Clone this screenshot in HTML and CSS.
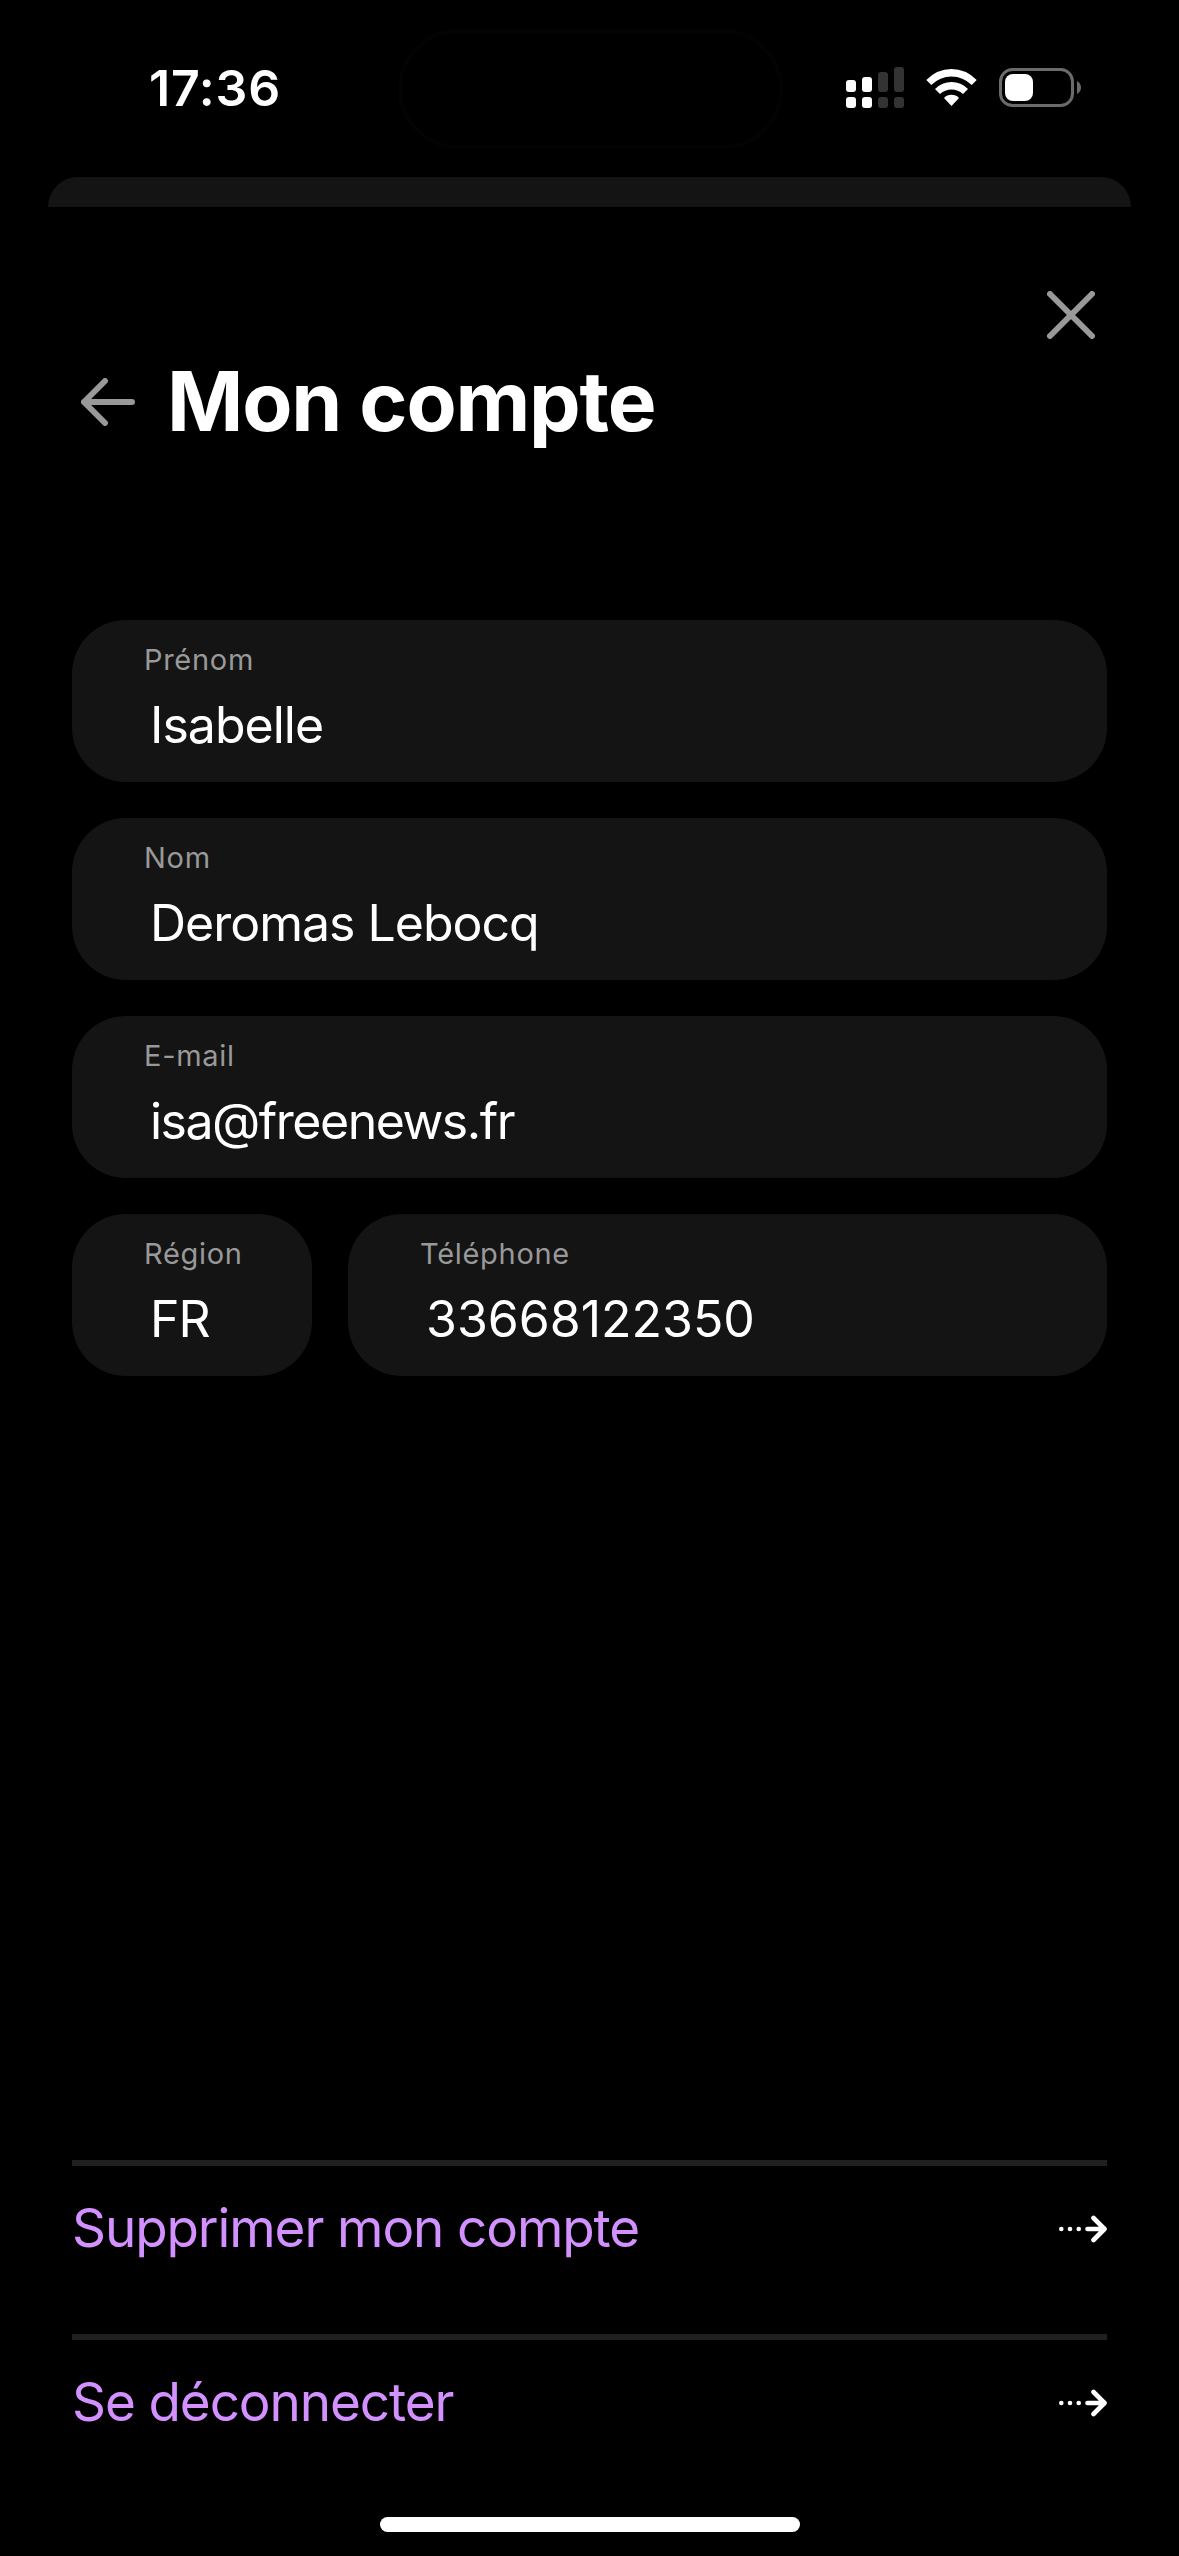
FILE: index.html
```html
<!DOCTYPE html>
<html lang="fr">
<head>
    <meta charset="UTF-8">
    <meta name="viewport" content="width=device-width, initial-scale=1.0">
    <title>Mon compte</title>
    <link rel="stylesheet" href="styles.css">
</head>
<body>
    <div class="status-bar">
        <div class="time">17:36</div>
        <div class="island"></div>
        <svg class="status-icons" width="240" height="44" viewBox="844 65 240 44">
            <g fill="#fff">
                <rect x="846" y="80" width="10" height="12" rx="3"/>
                <rect x="862" y="77" width="10" height="15" rx="3"/>
                <rect x="846" y="97" width="10" height="11" rx="3"/>
                <rect x="862" y="97" width="10" height="11" rx="3"/>
            </g>
            <g fill="#333">
                <rect x="878" y="72" width="10" height="20" rx="3"/>
                <rect x="894" y="67" width="10" height="25" rx="3"/>
                <rect x="878" y="97" width="10" height="11" rx="3"/>
                <rect x="894" y="97" width="10" height="11" rx="3"/>
            </g>
            <g fill="#fff">
                <path d="M926.3 80 Q937 69 951.5 69 Q966 69 976.7 80 L971.7 85 Q963 76.500 951.5 76.500 Q940 76.500 931.3 85 Z"/>
                <path d="M935 89 Q942 82 951.5 82 Q961 82 968 89 L963 94 Q958 89.500 951.5 89.500 Q945 89.500 940 94 Z"/>
                <path d="M944 98 Q947 94.700 951.5 94.700 Q956 94.700 959 98 L951.5 106 Z"/>
            </g>
            <rect x="1000.5" y="69.500" width="72" height="36" rx="12" fill="none" stroke="#6b6b6b" stroke-width="3"/>
            <rect x="1005" y="74" width="28" height="27" rx="8" fill="#fff"/>
            <path d="M1077 81 Q1081 83.500 1081 87.500 Q1081 91.500 1077 94 Z" fill="#6b6b6b"/>
        </svg>
    </div>
    <div class="sheet-behind"></div>

    <div class="sheet">
        <div class="close-row">
            <svg width="48" height="48" viewBox="0 0 48 48" fill="none" stroke="#999" stroke-width="6" stroke-linecap="round">
                <path d="M3 3 L45 45 M45 3 L3 45"/>
            </svg>
        </div>
        <div class="heading">
            <svg width="54" height="48" viewBox="0 0 54 48" fill="none" stroke="#999" stroke-width="6" stroke-linecap="round" stroke-linejoin="round">
                <path d="M24 3 L3 24 L24 45 M3 24 H51"/>
            </svg>
            <h1>Mon compte</h1>
        </div>

        <div class="form">
            <div class="field">
                <div class="label">Prénom</div>
                <div class="value">Isabelle</div>
            </div>
            <div class="field">
                <div class="label">Nom</div>
                <div class="value">Deromas Lebocq</div>
            </div>
            <div class="field">
                <div class="label">E-mail</div>
                <div class="value email">isa@freenews.fr</div>
            </div>
            <div class="row">
                <div class="field region">
                    <div class="label">Région</div>
                    <div class="value">FR</div>
                </div>
                <div class="field phone">
                    <div class="label">Téléphone</div>
                    <div class="value">33668122350</div>
                </div>
            </div>
        </div>

        <div class="actions">
            <div class="action">
                <span>Supprimer mon compte</span>
                <svg width="50" height="30" viewBox="0 0 50 30" fill="#fff">
                    <circle cx="4.300" cy="15" r="2.300"/>
                    <circle cx="13" cy="15" r="2.300"/>
                    <circle cx="21.700" cy="15" r="2.300"/>
                    <path d="M30.500 15 H47 M36.500 4 L47.500 15 L36.500 26" fill="none" stroke="#fff" stroke-width="4.600" stroke-linecap="round" stroke-linejoin="round"/>
                </svg>
            </div>
            <div class="action">
                <span>Se déconnecter</span>
                <svg width="50" height="30" viewBox="0 0 50 30" fill="#fff">
                    <circle cx="4.300" cy="15" r="2.300"/>
                    <circle cx="13" cy="15" r="2.300"/>
                    <circle cx="21.700" cy="15" r="2.300"/>
                    <path d="M30.500 15 H47 M36.500 4 L47.500 15 L36.500 26" fill="none" stroke="#fff" stroke-width="4.600" stroke-linecap="round" stroke-linejoin="round"/>
                </svg>
            </div>
        </div>
    </div>
    <div class="home-bar"></div>
</body>
</html>
```
FILE: styles.css
```css
* {
    box-sizing: border-box;
}
body {
    margin: 0;
    width: 1179px;
    height: 2556px;
    overflow: hidden;
    background: #000;
    color: #fff;
    font-family: 'Inter', sans-serif;
    display: flex;
    flex-direction: column;
}
.status-bar {
    height: 177px;
    padding: 29px 95px 0 149px;
    display: flex;
    align-items: flex-start;
}
.time {
    width: 249px;
    margin-top: 29px;
    font-size: 50px;
    line-height: 60px;
    font-weight: 600;
    letter-spacing: 0.8px;
}
.island {
    width: 385px;
    height: 120px;
    border: 4px solid #030303;
    border-radius: 60px;
}
.status-icons {
    margin: 36px 0 0 61px;
    flex-shrink: 0;
}
.sheet-behind {
    height: 30px;
    margin: 0 48px;
    border-radius: 30px 30px 0 0;
    background: #141414;
}
.sheet {
    flex: 1;
    display: flex;
    flex-direction: column;
    padding: 84px 72px 0;
}
.close-row {
    display: flex;
    justify-content: flex-end;
    padding-right: 12px;
}
.heading {
    display: flex;
    align-items: center;
    height: 100px;
    margin-top: 13px;
    padding-left: 9px;
}
h1 {
    margin: 0 0 0 32px;
    font-size: 82px;
    line-height: 100px;
    font-weight: 700;
    letter-spacing: -1.2px;
}
.form {
    display: flex;
    flex-direction: column;
    gap: 36px;
    margin-top: 168px;
}
.row {
    display: flex;
    gap: 36px;
}
.field {
    height: 162px;
    padding: 22px 72px 0;
    border-radius: 54px;
    background: #141414;
}
.region {
    width: 240px;
}
.phone {
    flex: 1;
}
.label {
    font-size: 29px;
    line-height: 36px;
    letter-spacing: 0.7px;
    color: #999;
    white-space: nowrap;
}
.value {
    margin: 17px 0 0 6px;
    font-size: 50px;
    line-height: 60px;
    letter-spacing: -1px;
    white-space: nowrap;
}
.email {
    letter-spacing: -1.5px;
}
.phone .value {
    letter-spacing: 0;
}
.actions {
    margin-top: 784px;
}
.action {
    height: 174px;
    border-top: 6px solid #202020;
    padding-bottom: 43px;
    display: flex;
    align-items: center;
    justify-content: space-between;
    font-size: 53px;
    letter-spacing: -1.1px;
    color: #d291ff;
}
.action span {
    margin-bottom: 2px;
}
.home-bar {
    width: 420px;
    height: 15px;
    margin: 0 auto 24px;
    border-radius: 8px;
    background: #fff;
}
```
